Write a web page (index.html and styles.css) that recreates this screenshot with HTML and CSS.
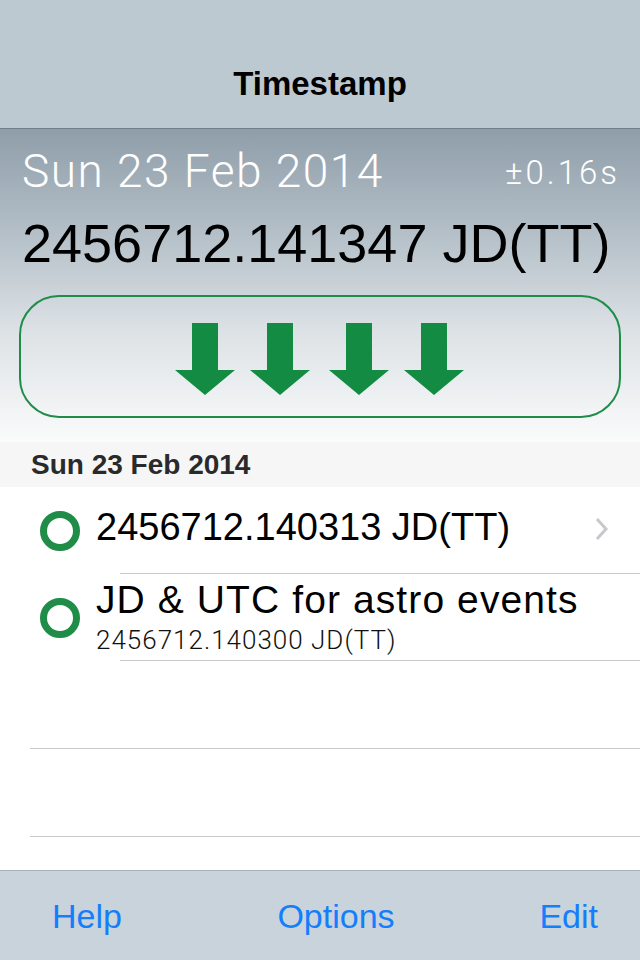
FILE: index.html
```html
<!DOCTYPE html>
<html lang="en">
<head>
    <meta charset="UTF-8">
    <meta name="viewport" content="width=device-width, initial-scale=1.0">
    <title>Timestamp</title>
    <link rel="stylesheet" href="styles.css">
</head>
<body>
    <div class="app">
        <!-- Navigation bar -->
        <header class="navbar">
            <h1 class="nav-title">Timestamp</h1>
        </header>

        <!-- Current time -->
        <section class="hero">
            <div class="date-row">
                <span class="hero-date">Sun 23 Feb 2014</span>
                <span class="hero-error">±0.16s</span>
            </div>
            <div class="hero-jd">2456712.141347 JD(TT)</div>
            <button class="stamp-button" type="button">
                <svg width="292" height="72" viewBox="0 0 292 72">
                    <g fill="#138b43">
                        <polygon points="17,0 43,0 43,47 60,47 30,72 0,47 17,47"/>
                        <polygon points="92,0 118,0 118,47 135,47 105,72 75,47 92,47"/>
                        <polygon points="171,0 197,0 197,47 214,47 184,72 154,47 171,47"/>
                        <polygon points="246,0 272,0 272,47 289,47 259,72 229,47 246,47"/>
                    </g>
                </svg>
            </button>
        </section>

        <!-- Saved stamps -->
        <div class="section-header">Sun 23 Feb 2014</div>
        <ul class="stamp-list">
            <li class="stamp-row">
                <svg class="dot" width="44" height="44" viewBox="0 0 44 44">
                    <circle cx="22" cy="22" r="16.5" fill="none" stroke="#1f8c48" stroke-width="7"/>
                </svg>
                <span class="stamp-title">2456712.140313 JD(TT)</span>
                <svg class="chevron" width="16" height="24" viewBox="0 0 16 24">
                    <polyline points="3,2 12,12 3,22" fill="none" stroke="#c7c7cc" stroke-width="3"/>
                </svg>
            </li>
            <li class="stamp-row">
                <svg class="dot" width="44" height="44" viewBox="0 0 44 44">
                    <circle cx="22" cy="22" r="16.5" fill="none" stroke="#1f8c48" stroke-width="7"/>
                </svg>
                <div class="stamp-text">
                    <span class="stamp-title wide">JD &amp; UTC for astro events</span>
                    <span class="stamp-sub">2456712.140300 JD(TT)</span>
                </div>
            </li>
            <li class="empty-row"></li>
            <li class="empty-row"></li>
        </ul>

        <!-- Toolbar -->
        <footer class="toolbar">
            <a class="tool-link" href="#">Help</a>
            <a class="tool-link" href="#">Options</a>
            <a class="tool-link right" href="#">Edit</a>
        </footer>
    </div>
</body>
</html>
```

FILE: styles.css
```css
body {
    margin: 0;
    font-family: "Liberation Sans", Arial, sans-serif;
    color: #000;
    background: #fff;
}
.app {
    width: 640px;
    height: 960px;
    display: flex;
    flex-direction: column;
    overflow: hidden;
}
.navbar {
    height: 128px;
    background-color: #bdc9d1;
    border-bottom: 1px solid #6f7e89;
    display: flex;
    justify-content: center;
    align-items: flex-end;
    box-sizing: content-box;
}
.nav-title {
    margin: 0 0 28px;
    font-size: 33px;
    line-height: 33px;
    font-weight: bold;
}
.hero {
    height: 313px;
    padding: 14px 0 0;
    box-sizing: border-box;
    background: linear-gradient(to bottom, #8f9eaa 0%, #b6c1c9 35%, #dde2e6 65%, #fafbfb 100%);
}
.date-row {
    display: flex;
    justify-content: space-between;
    align-items: baseline;
    padding: 0 20px 0 22px;
    height: 56px;
    line-height: 56px;
    color: #fff;
    font-family: Roboto, "Liberation Sans", sans-serif;
    font-weight: 300;
}
.hero-date {
    font-size: 46px;
    letter-spacing: 1.5px;
}
.hero-error {
    font-size: 33px;
    letter-spacing: 3px;
    position: relative;
    top: -3px;
}
.hero-jd {
    margin-top: 12px;
    padding-left: 22px;
    font-size: 54px;
    line-height: 64px;
}
.stamp-button {
    display: flex;
    justify-content: center;
    align-items: center;
    width: 602px;
    height: 123px;
    margin: 20px 0 0 19px;
    padding: 4px 0 0;
    border: 2px solid #1f8c48;
    border-radius: 40px;
    background: transparent;
}
.stamp-button svg {
    margin-left: 2px;
}
.section-header {
    height: 45px;
    box-sizing: border-box;
    padding: 9px 0 0 31px;
    background-color: #f6f6f6;
    font-size: 28px;
    line-height: 28px;
    font-weight: bold;
    color: #2a2a2a;
}
.stamp-list {
    list-style: none;
    margin: 0;
    padding: 0;
    flex: 1;
}
.stamp-row {
    position: relative;
    display: flex;
    align-items: center;
    height: 87px;
    padding-left: 38px;
}
.stamp-row::after {
    content: "";
    position: absolute;
    left: 120px;
    right: 0;
    bottom: 0;
    border-bottom: 1px solid #c8c7cc;
}
.dot {
    flex-shrink: 0;
    margin-right: 14px;
}
.stamp-title {
    font-size: 38px;
    line-height: 1;
    padding-bottom: 8px;
}
.stamp-title.wide {
    font-size: 39px;
    letter-spacing: 1.1px;
    padding-bottom: 0;
}
.stamp-text {
    display: flex;
    flex-direction: column;
    padding-bottom: 2px;
}
.stamp-sub {
    margin-top: 8px;
    font-family: Roboto, "Liberation Sans", sans-serif;
    font-weight: 300;
    font-size: 26px;
    letter-spacing: 1px;
    line-height: 1;
    color: #111;
}
.chevron {
    margin-left: auto;
    margin-right: 30px;
    margin-bottom: 4px;
}
.empty-row {
    height: 87px;
    margin-left: 30px;
    border-bottom: 1px solid #c8c7cc;
}
.toolbar {
    height: 89px;
    flex-shrink: 0;
    background-color: #c9d3db;
    border-top: 1px solid #a8b1b9;
    display: grid;
    grid-template-columns: 1fr auto 1fr;
    align-items: center;
    padding: 0 20px 0 52px;
}
.tool-link {
    font-size: 34px;
    line-height: 1;
    color: #147efb;
    text-decoration: none;
}
.tool-link.right {
    justify-self: end;
    margin-right: 22px;
}
```
